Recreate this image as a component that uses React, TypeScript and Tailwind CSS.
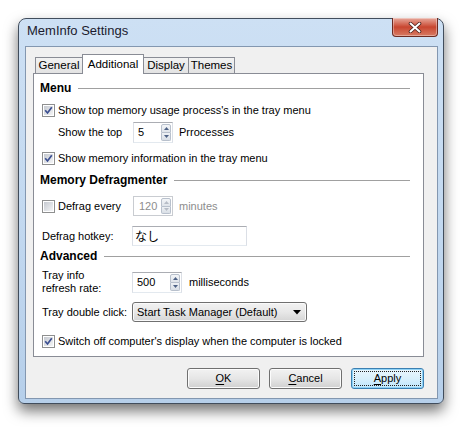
import React from "react";

const CheckBox = ({ checked }: { checked?: boolean }) => (
  <span className="flex h-[13px] w-[13px] shrink-0 items-center justify-center border border-[#8e8f8f] bg-white">
    <span className="flex h-[9px] w-[9px] items-center justify-center bg-gradient-to-br from-[#c5c9d0] to-[#f4f5f6]">
      {checked && (
        <svg width="9" height="9" viewBox="0 0 9 9">
          <path d="M1.2 4.3 L3.5 7 L7.8 1.2" fill="none" stroke="#3b4f91" strokeWidth="1.7" />
        </svg>
      )}
    </span>
  </span>
);

const SpinArrows = ({ disabled }: { disabled?: boolean }) => {
  const fill = disabled ? "#b6bcc6" : "#4d6185";
  return (
    <div className="my-[1px] mr-[1px] flex w-[10px] flex-col">
      <div className="flex flex-1 items-center justify-center rounded-t-[2px] border border-[#b8c0cc] bg-gradient-to-b from-[#f3f5f8] to-[#dfe4ea]">
        <svg width="5" height="3" viewBox="0 0 5 3">
          <path d="M0 3 L2.5 0 L5 3 Z" fill={fill} />
        </svg>
      </div>
      <div className="flex flex-1 items-center justify-center rounded-b-[2px] border border-t-0 border-[#b8c0cc] bg-gradient-to-b from-[#eef1f5] to-[#d9dfe6]">
        <svg width="5" height="3" viewBox="0 0 5 3">
          <path d="M0 0 L2.5 3 L5 0 Z" fill={fill} />
        </svg>
      </div>
    </div>
  );
};

const Heading = ({ title }: { title: string }) => (
  <div className="ml-[6px] mr-[13px] flex h-[18px] items-center">
    <span className="text-[12px] font-bold">{title}</span>
    <span className="ml-[7px] h-px flex-1 bg-[#a0a0a0]" />
  </div>
);

const Button = ({ children, focused }: { children: React.ReactNode; focused?: boolean }) => (
  <div
    className={
      focused
        ? "flex h-[21px] w-[73px] items-center justify-center rounded-[3px] border border-[#3c7fb1] bg-gradient-to-b from-[#eaf6fd] via-[#d9f0fc] to-[#bee6fd] p-[2px] shadow-[inset_0_0_0_1px_#8fd3f7]"
        : "flex h-[21px] w-[73px] items-center justify-center rounded-[3px] border border-[#707070] bg-gradient-to-b from-[#f2f2f2] via-[#e6e6e6] to-[#d0d0d0] shadow-[inset_0_0_0_1px_#fcfcfc]"
    }
  >
    <span
      className={
        focused
          ? "flex h-full w-full items-center justify-center border border-dotted border-[#222] text-[11px]"
          : "flex h-full w-full items-center justify-center text-[11px]"
      }
    >
      {children}
    </span>
  </div>
);

export default function App() {
  return (
    <div className="h-[428px] w-[468px] bg-white pl-[18px] pt-[18px] font-['Liberation_Sans',Arial,sans-serif] text-black">
      <div className="flex h-[386px] w-[426px] flex-col rounded-t-[8px] rounded-b-[6px] border border-[#414d5c] bg-gradient-to-b from-[#cde0f4] via-[#c3d9f0] to-[#b6cfea] shadow-[0_7px_14px_rgba(0,0,0,0.55)]">
        {/* Title bar */}
        <div className="flex h-[27px] items-start justify-between pl-[8px] pr-[5px]">
          <span className="mt-[4px] text-[13px] leading-[16px] text-[#1b1b2e]">MemInfo Settings</span>
          <div className="mt-[-1px] flex h-[19px] w-[46px] items-center justify-center rounded-b-[4px] border border-t-0 border-[#6c2a21] bg-gradient-to-b from-[#e6a89c] via-[#c8452f] to-[#d77a63] shadow-[inset_0_0_0_1px_rgba(255,255,255,0.35)]">
            <svg width="14" height="11" viewBox="0 0 14 11">
              <path d="M2.5 1.5 L11.5 9.5 M11.5 1.5 L2.5 9.5" stroke="#4a1f1a" strokeWidth="3.6" strokeLinecap="round" />
              <path d="M2.5 1.5 L11.5 9.5 M11.5 1.5 L2.5 9.5" stroke="#ffffff" strokeWidth="2" strokeLinecap="round" />
            </svg>
          </div>
        </div>

        {/* Client area */}
        <div className="mb-[4px] ml-[6px] mr-[5px] flex flex-1 flex-col border border-[#8397b0] bg-[#f0f0f0] pl-[7px] pt-[7px]">
          {/* Tabs */}
          <div className="flex h-[19px] items-end pl-[2px] text-[11.5px]">
            <div className="flex h-[16px] w-[47px] items-center justify-center border border-b-0 border-r-0 border-[#898c95] bg-gradient-to-b from-[#f2f2f2] to-[#e3e3e3]">
              General
            </div>
            <div className="relative z-10 mb-[-1px] flex h-[20px] w-[62px] items-start justify-center border border-b-0 border-[#898c95] bg-white pt-[1px]">
              Additional
            </div>
            <div className="flex h-[16px] w-[45px] items-center justify-center border border-b-0 border-l-0 border-[#898c95] bg-gradient-to-b from-[#f2f2f2] to-[#e3e3e3]">
              Display
            </div>
            <div className="flex h-[16px] w-[46px] items-center justify-center border border-b-0 border-l-0 border-[#898c95] bg-gradient-to-b from-[#f2f2f2] to-[#e3e3e3]">
              Themes
            </div>
          </div>

          {/* Tab panel */}
          <div className="flex h-[284px] w-[391px] flex-col border border-[#898c95] bg-white pt-[5px] text-[11px]">
            <Heading title="Menu" />

            <div className="mt-[4px] flex h-[18px] items-center gap-[3px] pl-[8px]">
              <CheckBox checked />
              <span>Show top memory usage process's in the tray menu</span>
            </div>

            <div className="mt-[2px] flex h-[22px] items-center pl-[24px]">
              <span className="w-[75px]">Show the top</span>
              <div className="flex h-[21px] w-[40px] items-stretch border border-[#abadb3] border-b-[#e3e9ef] border-x-[#dbdfe6] bg-white">
                <span className="flex flex-1 items-center pl-[4px]">5</span>
                <SpinArrows />
              </div>
              <span className="ml-[6px]">Prrocesses</span>
            </div>

            <div className="mt-[6px] flex h-[18px] items-center gap-[3px] pl-[8px]">
              <CheckBox checked />
              <span>Show memory information in the tray menu</span>
            </div>

            <div className="mt-[4px]">
              <Heading title="Memory Defragmenter" />
            </div>

            <div className="mt-[7px] flex h-[20px] items-center pl-[8px]">
              <CheckBox />
              <span className="ml-[3px] w-[75px]">Defrag every</span>
              <div className="flex h-[20px] w-[40px] items-stretch border border-[#c9ccd1] bg-white">
                <span className="flex flex-1 items-center pl-[5px] text-[#8d8d8d]">120</span>
                <SpinArrows disabled />
              </div>
              <span className="ml-[6px] text-[#8d8d8d]">minutes</span>
            </div>

            <div className="mt-[10px] flex h-[20px] items-center pl-[8px]">
              <span className="w-[90px]">Defrag hotkey:</span>
              <div className="flex h-[20px] w-[115px] items-center border border-[#abadb3] border-b-[#e3e9ef] border-x-[#dbdfe6] bg-white pl-[2px] font-['Noto_Sans_CJK_JP',sans-serif] text-[12px]">
                なし
              </div>
            </div>

            <div className="mt-[1px]">
              <Heading title="Advanced" />
            </div>

            <div className="mt-[3px] flex h-[28px] items-center pl-[8px]">
              <span className="w-[90px] leading-[13px]">
                Tray info
                <br />
                refresh rate:
              </span>
              <div className="flex h-[21px] w-[50px] items-stretch border border-[#abadb3] border-b-[#e3e9ef] border-x-[#dbdfe6] bg-white">
                <span className="flex flex-1 items-center pl-[4px]">500</span>
                <SpinArrows />
              </div>
              <span className="ml-[7px]">milliseconds</span>
            </div>

            <div className="mt-[6px] flex h-[20px] items-center pl-[8px]">
              <span className="w-[90px]">Tray double click:</span>
              <div className="flex h-[20px] w-[175px] items-center justify-between rounded-[3px] border border-[#707070] bg-gradient-to-b from-[#f2f2f2] via-[#e8e8e8] to-[#d5d5d5] pl-[4px] pr-[5px] shadow-[inset_0_0_0_1px_#fafafa]">
                <span>Start Task Manager (Default)</span>
                <svg width="8" height="5" viewBox="0 0 8 5">
                  <path d="M0 0 L8 0 L4 4.5 Z" fill="#000" />
                </svg>
              </div>
            </div>

            <div className="mt-[10px] flex h-[18px] items-center gap-[3px] pl-[8px]">
              <CheckBox checked />
              <span>Switch off computer's display when the computer is locked</span>
            </div>
          </div>

          {/* Buttons */}
          <div className="mt-[11px] flex w-[391px] justify-end gap-[9px]">
            <Button>
              <span className="underline underline-offset-2">O</span>K
            </Button>
            <Button>
              <span className="underline underline-offset-2">C</span>ancel
            </Button>
            <Button focused>
              <span className="underline underline-offset-2">A</span>pply
            </Button>
          </div>
        </div>
      </div>
    </div>
  );
}
